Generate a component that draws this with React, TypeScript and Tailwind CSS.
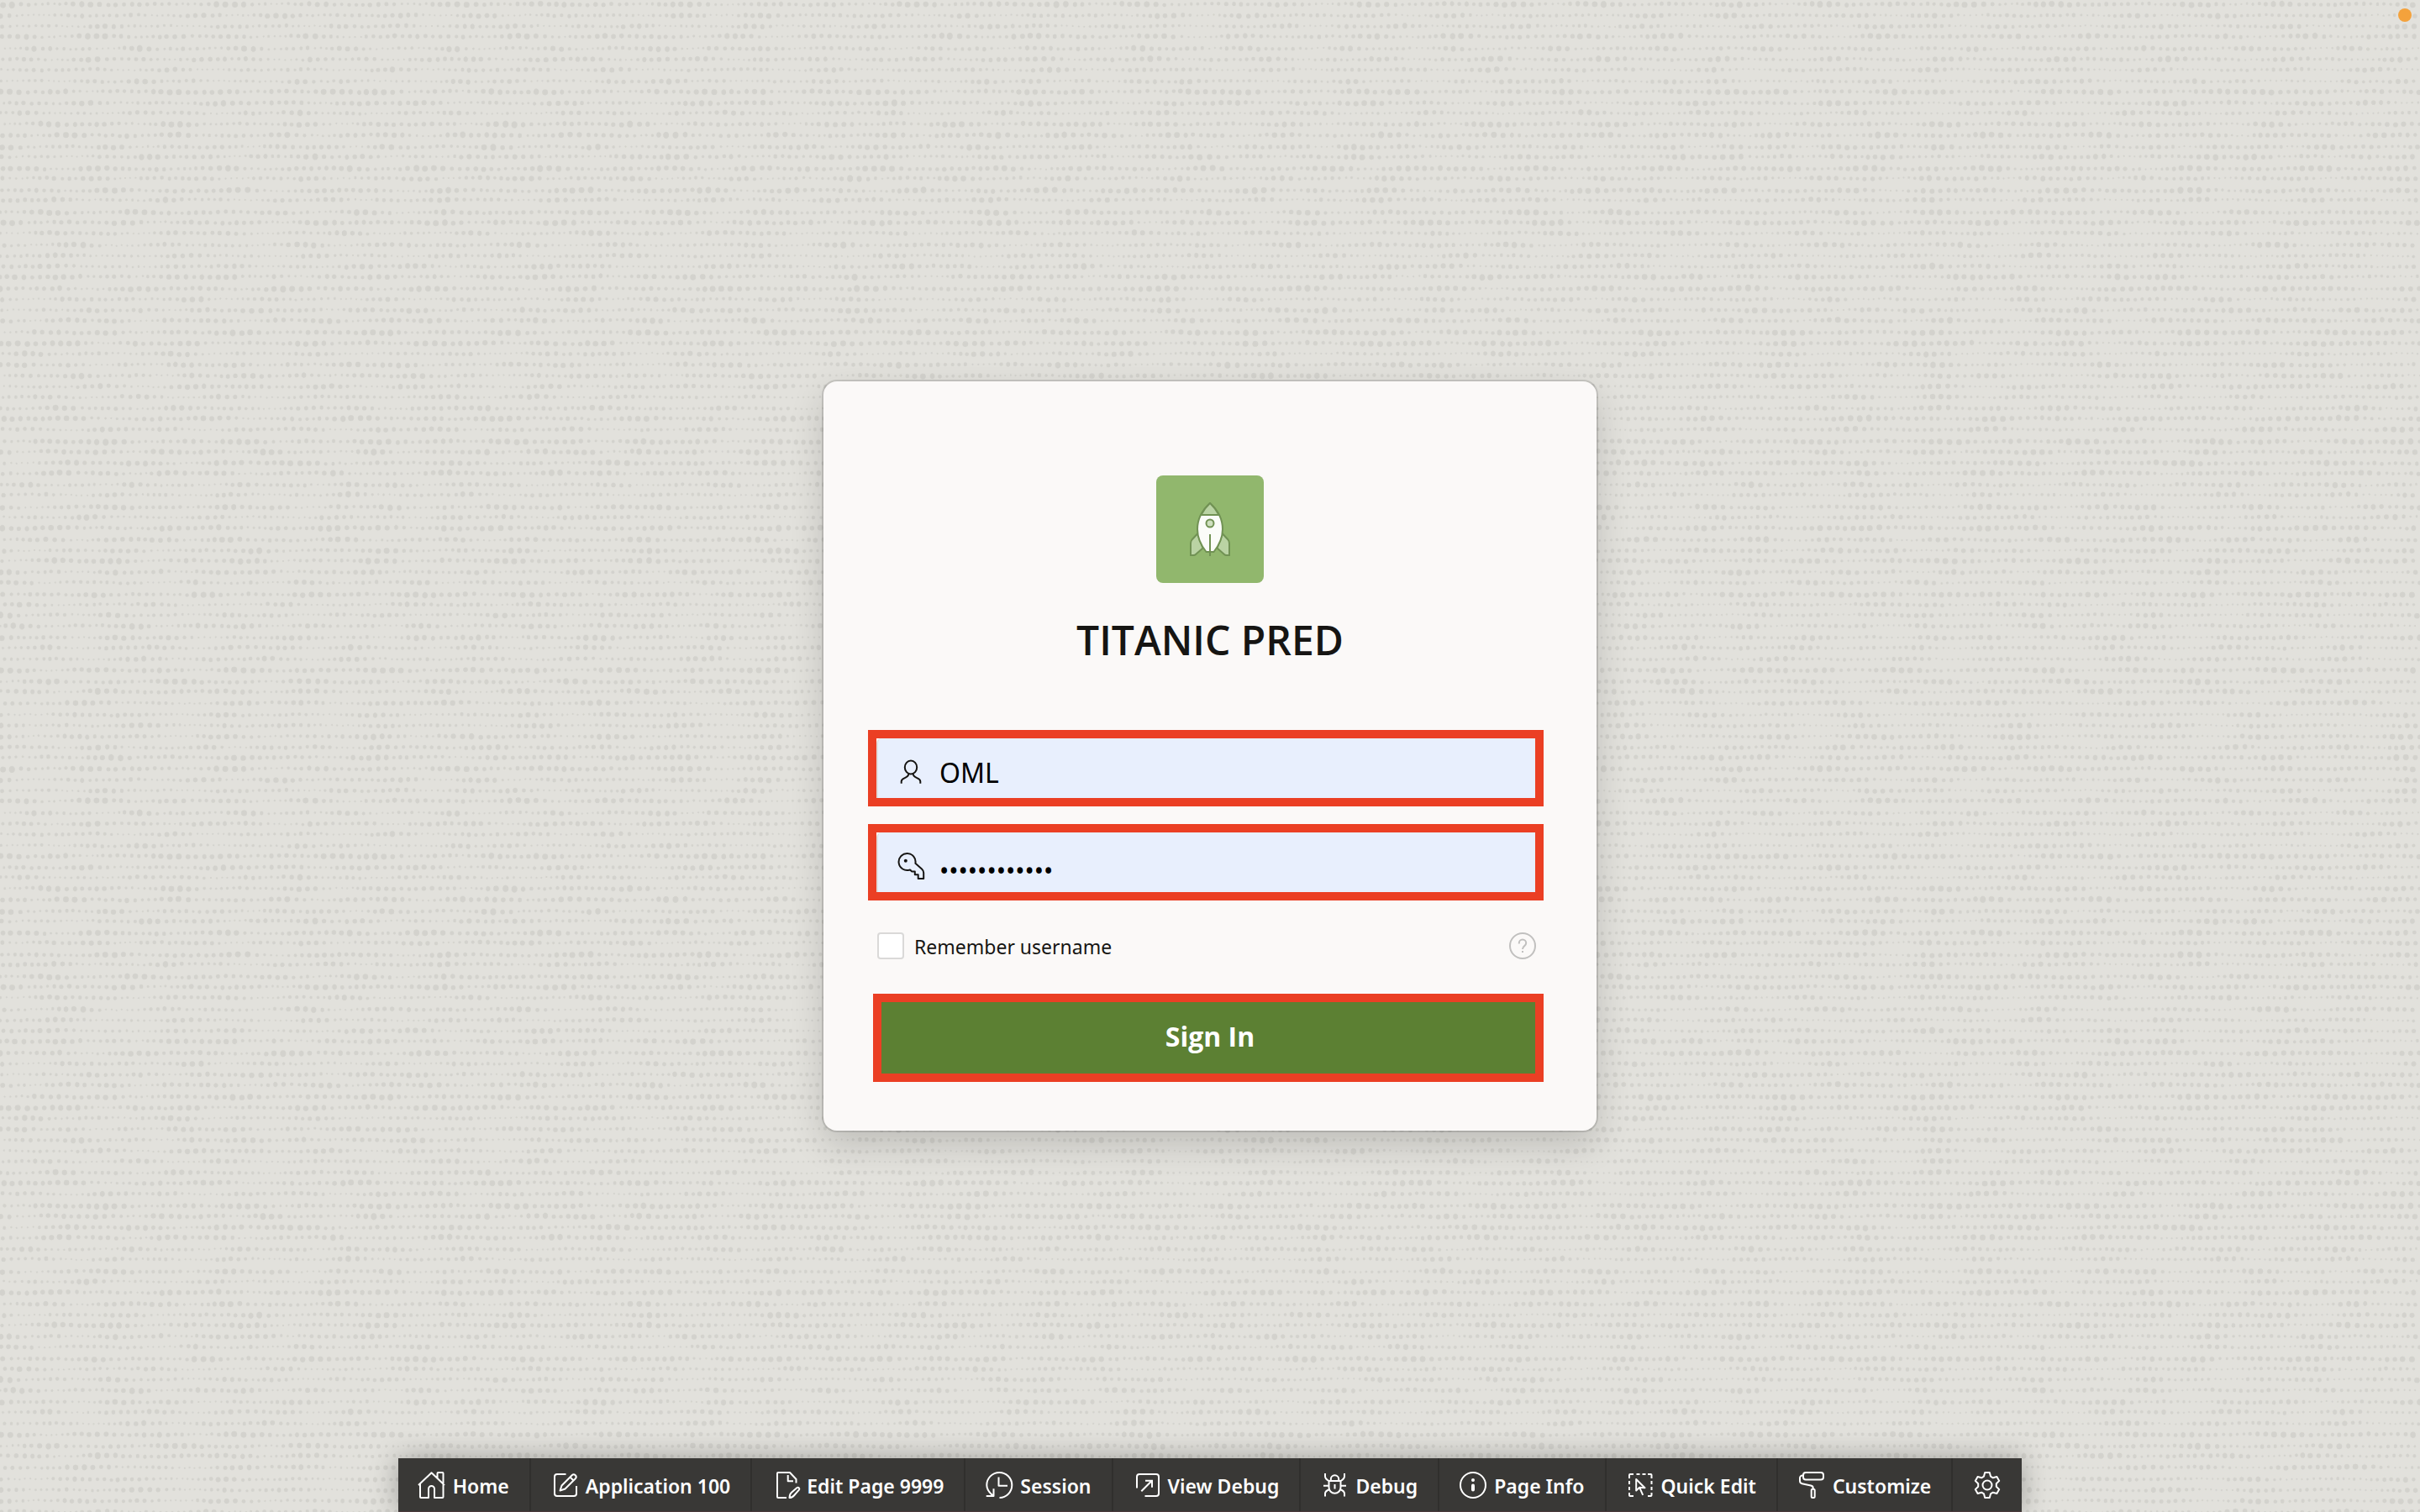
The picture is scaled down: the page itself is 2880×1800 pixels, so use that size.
import React, { type ReactNode } from "react";

/* ---------- woven background texture ---------- */

const TILE_W = 2880;
const ROW_H = 13;
const ROWS = 70;

function buildTexture(): string {
  let seed = 7919;
  const rand = () => {
    seed = (seed * 1103515245 + 12345) % 2147483648;
    return seed / 2147483648;
  };
  const parts: string[] = [];
  for (let row = 0; row < ROWS; row++) {
    const phase = rand() * 6.28;
    const phase2 = rand() * 6.28;
    const phase3 = rand() * 6.28;
    const freq = 14 + Math.floor(rand() * 12);
    const freq2 = 31 + Math.floor(rand() * 16);
    const base = 1.6 + rand() * 0.8;
    const y0 = row * ROW_H + 4 + rand() * 2;
    let x = rand() * 6;
    while (x < TILE_W) {
      const t = (x / TILE_W) * 6.283;
      const wave = Math.sin(t * freq + phase) * 0.6 + Math.sin(t * freq2 + phase2) * 0.6 + Math.sin(t * 5 + phase3) * 0.2;
      const r = Math.max(1, Math.min(3.4, base + wave + (rand() - 0.5) * 0.6));
      const y = y0 + Math.sin(t * freq + phase2) * 0.5 + (rand() - 0.5);
      const d = (r * 2).toFixed(1);
      const rr = r.toFixed(1);
      parts.push(`M${(x - r).toFixed(1)} ${y.toFixed(1)}a${rr} ${rr} 0 1 0 ${d} 0a${rr} ${rr} 0 1 0-${d} 0`);
      x += 3.8 + r * 1.9 + rand() * 1.5;
    }
  }
  return parts.join("");
}

const TEXTURE = buildTexture();

function Texture() {
  return (
    <svg className="absolute inset-0 h-full w-full" aria-hidden="true">
      <defs>
        <pattern id="weave" width={TILE_W} height={ROW_H * ROWS} patternUnits="userSpaceOnUse">
          <path d={TEXTURE} fill="#d3d2cd" stroke="#d3d2cd" strokeOpacity="0.35" strokeWidth="1" />
        </pattern>
      </defs>
      <rect width="100%" height="100%" fill="url(#weave)" />
    </svg>
  );
}

/* ---------- icons ---------- */

function Icon({ children }: { children: ReactNode }) {
  return (
    <svg
      viewBox="0 0 32 32"
      className="size-8 shrink-0 overflow-visible"
      fill="none"
      stroke="currentColor"
      strokeWidth="2"
      strokeLinejoin="round"
      aria-hidden="true"
    >
      {children}
    </svg>
  );
}

const HomeIcon = () => (
  <Icon>
    <path d="M0 16 15.5 1.3 31 16M22.5 7.5V2a1 1 0 0 1 1-1h5a1 1 0 0 1 1 1v28a1 1 0 0 1-1 1H19V20.5a3.5 3.5 0 0 0-7 0V31H3a1 1 0 0 1-1-1V14.5" />
  </Icon>
);

const ComposeIcon = () => (
  <Icon>
    <path d="M17.5 3H7a3 3 0 0 0-3 3v20a3 3 0 0 0 3 3h20a3 3 0 0 0 3-3v-9" />
    <path d="m10.5 22.5 2-6L24.7 4.2a2.9 2.9 0 0 1 4.1 4.1L16.5 20.5zM22.5 6.5l4 4" />
  </Icon>
);

const FileEditIcon = () => (
  <Icon>
    <path d="M17 31H7a1 1 0 0 1-1-1V2a1 1 0 0 1 1-1h14l7.5 8v4.5M18.7 4v7.3H25" />
    <path d="M20.5 31c0-3 .8-4.7 2.5-6.3l6.3-5.4c1.8-1.3 3.7.4 2.6 2.3L26.3 28c-1.6 1.9-3 3-5.8 3z" />
  </Icon>
);

const SessionIcon = () => (
  <Icon>
    <path d="M16.5 31A15 15 0 1 0 1.3 16c0 5 3 9 7.7 12.7M9.5 20.3V29H.7M15.5 6.5v10.3H26" />
  </Icon>
);

const ViewIcon = () => (
  <Icon>
    <path d="M4 19.5V6a3 3 0 0 1 3-3h20a3 3 0 0 1 3 3v20a3 3 0 0 1-3 3H13.5" />
    <path d="M9.3 23.3 21.8 10.8M14 10.8h8v8" strokeLinejoin="miter" />
  </Icon>
);

const BugIcon = () => (
  <Icon>
    <path d="M9.5 11h14v7.5c0 4.2-3.2 7.3-7 7.3s-7-3.1-7-7.3zM11.8 11V9a4.7 4.7 0 0 1 9.4 0v2" />
    <path d="M5 2v3.5Q5 8.5 9.5 11M28 2v3.5q0 3-4.5 5.5M3 16.8h6.5M23.5 16.8H30M5 29.5V26q0-3 5.2-5M28 29.5V26q0-3-5.2-5M16.5 15v5.5" />
  </Icon>
);

const InfoIcon = () => (
  <Icon>
    <circle cx="16" cy="16" r="15" />
    <circle cx="16" cy="10" r="2" fill="currentColor" stroke="none" />
    <path d="M16 16.5v5" strokeWidth="4" strokeLinecap="round" />
  </Icon>
);

const QuickEditIcon = () => (
  <Icon>
    <path d="M3 8V4a1 1 0 0 1 1-1h4M11.5 3h4M18.5 3h4M25 3h3.5a1 1 0 0 1 1 1v4M29.5 11v4M29.5 18v4M29.5 25v3a1 1 0 0 1-1 1H25M8 29H4a1 1 0 0 1-1-1v-3M3 22v-4M3 15v-4" />
    <path d="M11.2 9v13.5l4-3.8 6.3.5zM15.2 18.8l4 9" />
  </Icon>
);

const RollerIcon = () => (
  <Icon>
    <rect x="6" y="1" width="24" height="8.5" rx="3" />
    <path d="M6 4.5H5a3 3 0 0 0-3 3V11c0 1.8.8 2.8 2.5 3.2L15 16.5c1.8.4 2.7 1.2 2.7 2.7v1.3" />
    <rect x="15.7" y="20.7" width="4" height="10.3" rx="1.5" />
  </Icon>
);

const GearIcon = () => (
  <Icon>
    <path d="M13.2 1h5.6l1.2 4.6 2.8 1.7 4.6-1.3 2.8 4.9-3.4 3.4v3.4l3.4 3.4-2.8 4.9-4.6-1.3-2.8 1.7-1.2 4.6h-5.6L12 26.4l-2.8-1.7L4.6 26l-2.8-4.9 3.4-3.4v-3.4l-3.4-3.4L4.6 6l4.6 1.3L12 5.6z" />
    <circle cx="16" cy="16" r="5.5" />
  </Icon>
);

const UserIcon = () => (
  <Icon>
    <ellipse cx="16" cy="10.5" rx="7.2" ry="8" />
    <path d="M4.7 29.7v-2.5c0-5 8.6-3.3 8.6-8.9M27.3 29.7v-2.5c0-5-8.6-3.3-8.6-8.9" />
  </Icon>
);

const KeyIcon = () => (
  <Icon>
    <path d="M21.4 12.8 29 19.5c1.5 1.4 2.2 2.5 2.2 4.5v7h-6.5v-4.7h-3.9v-3.8h-3.4c-1 0-1.4-2-2.9-1.9A10 10 0 1 1 21.4 12.8z" />
    <circle cx="9.8" cy="9.8" r="2" fill="currentColor" stroke="none" />
  </Icon>
);

const HelpIcon = () => (
  <Icon>
    <circle cx="16" cy="16" r="15" />
    <path d="M11.8 13.5v-.8a4.2 4.2 0 0 1 8.4 0c0 3.8-4.2 3-4.2 7.3M16 22v2" />
  </Icon>
);

const Rocket = () => (
  <svg viewBox="-24 0 48 64" className="h-16 w-12" stroke="#719254" strokeWidth="2" aria-hidden="true">
    <path fill="#bad3a4" d="M-15 37.5-21.5 44.5Q-23 46.5-23 49V63h3.5q1.5 0 2.5-1l8.5-7.5z" />
    <path fill="#bad3a4" d="M15 37.5 21.5 44.5Q23 46.5 23 49V63h-3.5q-1.5 0-2.5-1l-8.5-7.5z" />
    <path fill="#fbfcf9" d="M0 1C-10 10-15 21-15 32c0 11 4.5 19.5 10.5 27h9C10.500 51.5 15 43 15 32 15 21 10 10 0 1z" />
    <path fill="#bad3a4" d="M0 1Q-6.5 7-10.6 15h21.2Q6.5 7 0 1z" />
    <circle cx="0" cy="25" r="4.5" fill="#cfe0c0" />
    <path d="M0 38v26" />
  </svg>
);

/* ---------- toolbar ---------- */

const TOOLS: { label: string; icon: ReactNode }[] = [
  { label: "Home", icon: <HomeIcon /> },
  { label: "Application 100", icon: <ComposeIcon /> },
  { label: "Edit Page 9999", icon: <FileEditIcon /> },
  { label: "Session", icon: <SessionIcon /> },
  { label: "View Debug", icon: <ViewIcon /> },
  { label: "Debug", icon: <BugIcon /> },
  { label: "Page Info", icon: <InfoIcon /> },
  { label: "Quick Edit", icon: <QuickEditIcon /> },
  { label: "Customize", icon: <RollerIcon /> },
];

function Toolbar() {
  return (
    <nav
      aria-label="Developer toolbar"
      className="flex h-16 border-b border-[#4b3a3c] bg-[#393836] text-white shadow-[0_0_32px_rgba(0,0,0,0.3)]"
    >
      {TOOLS.map((tool) => (
        <button
          key={tool.label}
          type="button"
          className="flex items-center gap-[9px] border-r-2 border-[#302f2d] px-6 text-[23px] leading-8 font-semibold whitespace-nowrap"
        >
          {tool.icon}
          <span className="pt-0.5">{tool.label}</span>
        </button>
      ))}
      <button type="button" aria-label="Options" className="flex items-center px-[25px]">
        <GearIcon />
      </button>
    </nav>
  );
}

/* ---------- sign-in card ---------- */

function Field({
  label,
  type,
  value,
  icon,
  textStyle,
}: {
  label: string;
  type: string;
  value: string;
  icon: ReactNode;
  textStyle: string;
}) {
  return (
    <div className="flex h-[91px] border-10 border-[#eb3f24] bg-white text-[#161513]">
      <div className="flex flex-1 items-center gap-[18px] rounded-tl-md border-l-2 border-[#dfdedd] bg-[#e8effd] pt-2 pl-[23px]">
        {icon}
        <input
          aria-label={label}
          type={type}
          defaultValue={value}
          className={`h-12 min-w-0 flex-1 bg-transparent text-black outline-none ${textStyle}`}
        />
      </div>
    </div>
  );
}

function SignInCard() {
  return (
    <form
      onSubmit={(e) => e.preventDefault()}
      className="w-full max-w-[920px] rounded-2xl bg-[#fbf9f8] pt-28 pr-[63px] pb-[58px] pl-[53px] shadow-[0_0_0_2px_rgba(0,0,0,0.12),0_16px_40px_rgba(0,0,0,0.16)]"
    >
      <header className="flex flex-col items-center gap-9 pl-[10px]">
        <div className="flex size-32 items-center justify-center rounded-lg bg-[#91b76d]">
          <Rocket />
        </div>
        <h1 className="font-['Open_Sans',sans-serif] text-[48px] leading-16 font-semibold text-[#161513]">
          TITANIC PRED
        </h1>
      </header>

      <div className="mt-[75px] flex flex-col gap-[21px]">
        <Field label="Username" type="text" value="OML" icon={<UserIcon />} textStyle="pt-0.5 text-[32px]" />
        <Field label="Password" type="password" value="titanic-pred" icon={<KeyIcon />} textStyle="pt-3 text-[30px]" />
      </div>

      <div className="mt-[38px] flex items-center justify-between pr-[9px] pl-[11px]">
        <label className="flex items-center gap-3 text-[23px] leading-8 text-[#161513]">
          <input
            type="checkbox"
            className="size-8 appearance-none rounded border-2 border-[#dad9d8] bg-white"
          />
          <span className="h-8 pt-px">Remember username</span>
        </label>
        <button type="button" aria-label="Help" className="text-[#c1c0bf]">
          <HelpIcon />
        </button>
      </div>

      <div className="mt-[41px] pl-[6px]">
        <button
          type="submit"
          className="h-[105px] w-full border-10 border-[#eb3f24] bg-[#5c8033] pb-1 pl-1 font-['Open_Sans',sans-serif] text-[32px] leading-10 font-bold text-white"
        >
          Sign In
        </button>
      </div>
    </form>
  );
}

export default function App() {
  return (
    <div className="relative isolate flex min-h-screen flex-col overflow-hidden bg-[#e2e1dc] font-['Noto_Sans',sans-serif]">
      <Texture />
      <span className="absolute top-[10px] right-[10px] size-4 rounded-full bg-[#f4a23c]" />
      <main className="relative flex flex-1 items-center justify-center pt-16">
        <SignInCard />
      </main>
      <footer className="relative flex justify-center">
        <Toolbar />
      </footer>
    </div>
  );
}
